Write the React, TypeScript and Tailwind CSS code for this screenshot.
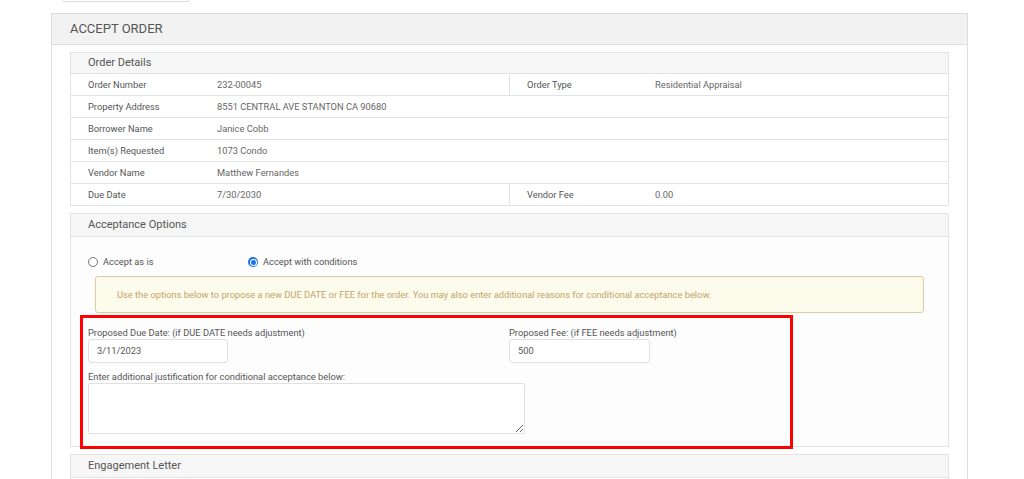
import type { ReactNode } from 'react'

const font = { fontFamily: 'Roboto, "Liberation Sans", Arial, sans-serif' }

interface DetailRowProps {
  label: string
  value: string
  label2?: string
  value2?: string
}

function DetailRow({ label, value, label2, value2 }: DetailRowProps) {
  return (
    <div className="flex h-[22px] items-center border-t border-[#e1e4e2] bg-white text-[9.3px]">
      <div className="w-[146px] pl-[17px] text-[#555]">{label}</div>
      <div className={label2 ? 'w-[292px] text-[#666]' : 'flex-1 text-[#666]'}>{value}</div>
      {label2 ? (
        <>
          <div className="flex h-full w-[146px] items-center border-l border-[#e1e4e2] pl-[17px] text-[#555]">
            {label2}
          </div>
          <div className="flex-1 text-[#666]">{value2}</div>
        </>
      ) : null}
    </div>
  )
}

function Panel({ title, compact, children }: { title: string; compact?: boolean; children?: ReactNode }) {
  return (
    <div className="border border-[#e1e4e2] bg-[#fdfdfd]">
      <div
        className={
          compact
            ? 'flex h-[20px] items-center bg-[#f6f6f6] pl-[17px] text-[11px] text-[#555]'
            : 'flex h-[22px] items-center bg-[#f6f6f6] pl-[17px] text-[11px] text-[#555]'
        }
      >
        {title}
      </div>
      {children}
    </div>
  )
}

function Radio({ checked, label }: { checked?: boolean; label: string }) {
  return (
    <label className="flex items-center gap-[5px] text-[9.3px] text-[#555]">
      {checked ? (
        <span className="flex h-[10px] w-[10px] items-center justify-center rounded-full bg-[#1a73e8]">
          <span className="flex h-[7px] w-[7px] items-center justify-center rounded-full bg-white">
            <span className="h-[5px] w-[5px] rounded-full bg-[#1a73e8]" />
          </span>
        </span>
      ) : (
        <span className="h-[10px] w-[10px] rounded-full border border-[#767676] bg-white" />
      )}
      {label}
    </label>
  )
}

export default function App() {
  return (
    <div className="relative h-[479px] w-[1024px] overflow-hidden bg-white" style={font}>
      <div className="ml-[63px] h-[2px] w-[127px] rounded-b-[3px] border-x border-b border-[#dcdcdc]" />

      <div className="ml-[51px] mt-[11px] w-[917px] border border-[#dadddb] bg-white">
        <div className="flex h-[31px] items-center border-b border-[#dadddb] bg-[#f2f2f2] px-[18px] text-[13px] text-[#555]">
          ACCEPT ORDER
        </div>

        <div className="flex flex-col gap-[7px] pl-[18px] pr-[18px] pt-[7px]">
          <Panel title="Order Details" compact>
            <DetailRow label="Order Number" value="232-00045" label2="Order Type" value2="Residential Appraisal" />
            <DetailRow label="Property Address" value="8551 CENTRAL AVE STANTON CA 90680" />
            <DetailRow label="Borrower Name" value="Janice Cobb" />
            <DetailRow label="Item(s) Requested" value="1073 Condo" />
            <DetailRow label="Vendor Name" value="Matthew Fernandes" />
            <DetailRow label="Due Date" value="7/30/2030" label2="Vendor Fee" value2="0.00" />
          </Panel>

          <Panel title="Acceptance Options">
            <div className="border-t border-[#e1e4e2] px-[17px] pb-[12px] pt-[18px]">
              <div className="flex h-[14px] items-center">
                <div className="w-[160px]">
                  <Radio label="Accept as is" />
                </div>
                <Radio checked label="Accept with conditions" />
              </div>

              <div className="mx-[7px] mt-[7px] flex h-[37px] items-center rounded-[3px] border border-[#dccda4] bg-[#fcfbec] pl-[21px] text-[9.3px] text-[#c3a46b]">
                Use the options below to propose a new DUE DATE or FEE for the order. You may also enter additional reasons for conditional acceptance below.
              </div>

              <div className="mt-[14px] flex">
                <div className="w-[421px]">
                  <div className="h-[12px] text-[9.3px] leading-[12px] text-[#555]">
                    Proposed Due Date: (if DUE DATE needs adjustment)
                  </div>
                  <div className="flex h-[24px] w-[140px] items-center rounded-[3px] border border-[#e0e0e0] bg-white pl-[8px] text-[9.3px] text-[#555]">
                    3/11/2023
                  </div>
                </div>
                <div>
                  <div className="h-[12px] text-[9.3px] leading-[12px] text-[#555]">
                    Proposed Fee: (if FEE needs adjustment)
                  </div>
                  <div className="flex h-[24px] w-[141px] items-center rounded-[3px] border border-[#e0e0e0] bg-white pl-[8px] text-[9.3px] text-[#555]">
                    500
                  </div>
                </div>
              </div>

              <div className="mt-[8px] h-[12px] text-[9.3px] leading-[12px] text-[#555]">
                Enter additional justification for conditional acceptance below:
              </div>
              <textarea
                className="block h-[51px] w-[437px] rounded-[2px] border border-[#e0e0e0] bg-white"
                defaultValue=""
              />
            </div>
          </Panel>

          <Panel title="Engagement Letter">
            <div className="h-[20px] border-t border-[#e1e4e2]" />
          </Panel>
        </div>
      </div>

      <div className="absolute left-[80px] top-[315px] h-[134px] w-[713px] border-[3px] border-[#ff0000]" />
    </div>
  )
}
